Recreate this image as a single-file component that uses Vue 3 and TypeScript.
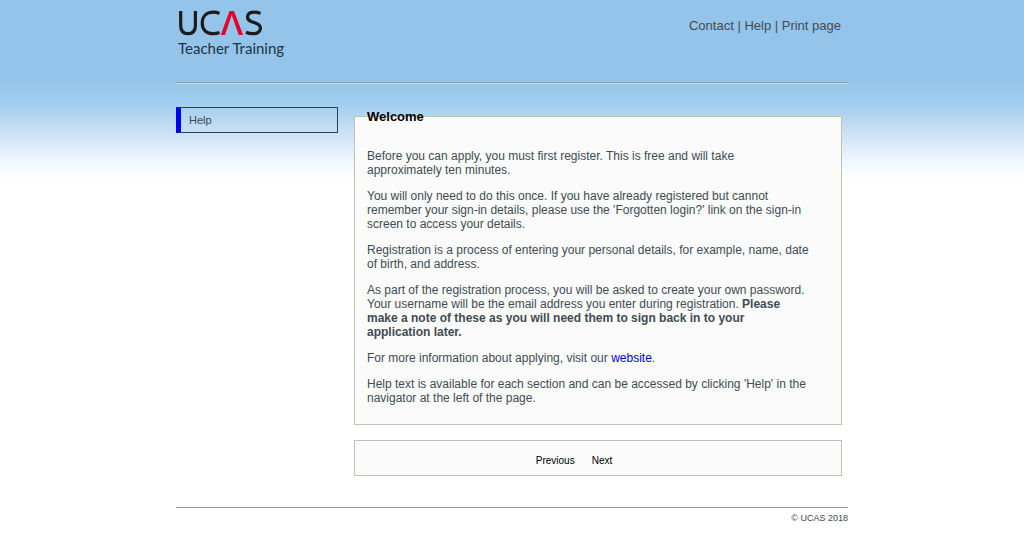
<script setup lang="ts">
interface LinkItem {
  label: string
  href: string
}

const topLinks: LinkItem[] = [
  { label: 'Contact', href: '#contact' },
  { label: 'Help', href: '#help' },
  { label: 'Print page', href: '#print' },
]
</script>

<template>
  <div class="page">
    <header class="header">
      <svg class="logo" viewBox="0 0 112 52" role="img" aria-label="UCAS Teacher Training">
        <g fill="none" stroke="#1c1c1c" stroke-width="3.2">
          <path d="M4.700 3V17.500Q4.700 25.700 12 25.700Q19.400 25.700 19.400 17.500V3" />
          <path d="M43.500 5.500Q40.500 4.200 37.500 4.200C30 4.200 26.200 8.800 26.200 15C26.200 21.500 30 25.700 37.500 25.700Q40.500 25.700 43.500 24.600" />
          <path d="M84.500 5.400Q81.500 4.200 78.500 4.200C70 4.200 69.500 11.500 75.800 13.700L79.500 15C87.500 18 84.800 25.700 77 25.700Q73 25.700 70 24.200" />
        </g>
        <path d="M44.800 27L53.500 3H58L67 27H62.800L55.700 7L49 27Z" fill="#e4002b" />
        <text x="2" y="46">Teacher Training</text>
      </svg>
      <nav class="top-links" aria-label="Site">
        <template v-for="(item, index) in topLinks" :key="item.label">
          <span v-if="index > 0"> | </span><a :href="item.href">{{ item.label }}</a>
        </template>
      </nav>
    </header>

    <div class="columns">
      <nav class="side" aria-label="Navigator">
        <a href="#help">Help</a>
      </nav>
      <main class="main">
        <section class="panel">
          <h1>Welcome</h1>
          <p>Before you can apply, you must first register. This is free and will take<br />approximately ten minutes.</p>
          <p>You will only need to do this once. If you have already registered but cannot<br />remember your sign-in details, please use the 'Forgotten login?' link on the sign-in<br />screen to access your details.</p>
          <p>Registration is a process of entering your personal details, for example, name, date<br />of birth, and address.</p>
          <p>As part of the registration process, you will be asked to create your own password.<br />Your username will be the email address you enter during registration. <strong>Please<br />make a note of these as you will need them to sign back in to your<br />application later.</strong></p>
          <p>For more information about applying, visit our <a href="#website">website</a>.</p>
          <p>Help text is available for each section and can be accessed by clicking 'Help' in the<br />navigator at the left of the page.</p>
        </section>
        <div class="actions">
          <button type="button">Previous</button>
          <button type="button">Next</button>
        </div>
      </main>
    </div>

    <footer class="footer">© UCAS 2018</footer>
  </div>
</template>

<style>
body {
  background: linear-gradient(#95c4ea 0, #95c4ea 82px, #9fcdef 98px, #a5cff0 106px, #b3d5f0 116px, #cae1f5 132px, #dfedf9 148px, #f1f7fe 162px, #fff 180px) no-repeat #fff;
}
</style>

<style scoped>
.page {
  box-sizing: border-box;
  max-width: 672px;
  margin: 0 auto;
  padding-top: 8px;
  font-family: "Liberation Sans", Arial, sans-serif;
  font-size: 12px;
  line-height: 14px;
  color: #414b52;
}

.header {
  display: flex;
  justify-content: space-between;
  align-items: flex-start;
  padding-bottom: 22px;
  border-bottom: 1px solid #8b9fae;
  box-shadow: 0 1px #d5d8d9;
}

.logo {
  width: 112px;
  height: 52px;
}

.logo text {
  font-family: Lato, "Open Sans", sans-serif;
  font-size: 15px;
  fill: #203442;
}

.top-links {
  padding: 11px 7px 0 0;
  font-size: 13px;
}

.top-links a {
  color: inherit;
  text-decoration: none;
}

.columns {
  display: grid;
  grid-template-columns: 162px minmax(0, 1fr);
  column-gap: 16px;
  padding: 24px 6px 0 0;
}

.side a {
  display: block;
  padding: 5px 8px;
  border: 1px solid #2c404e;
  border-left: 5px solid #0000f5;
  font-size: 11px;
  color: #414b52;
  text-decoration: none;
}

.main {
  padding-top: 9px;
}

.panel {
  padding: 0 12px 19px;
  border: 1px solid #c5c0b6;
  background: #fbfbfb;
}

.panel h1 {
  margin: -7px 0 25px;
  font-size: 13px;
  line-height: 14px;
  color: #000;
}

.panel p {
  margin: 0 0 12px;
}

.panel p:last-child {
  margin-bottom: 0;
}

.panel a {
  color: #0000f5;
  text-decoration: none;
}

.actions {
  display: flex;
  justify-content: center;
  gap: 17px;
  margin-top: 15px;
  padding: 13px 48px 7px 0;
  border: 1px solid #c5c0b6;
  background: #fbfbfb;
}

.actions button {
  padding: 0;
  border: 0;
  background: none;
  font-family: inherit;
  font-size: 10px;
  line-height: 14px;
  color: #000;
}

.footer {
  margin-top: 31px;
  padding-top: 3px;
  border-top: 1px solid #9a9c9e;
  font-size: 9px;
  text-align: right;
}
</style>
